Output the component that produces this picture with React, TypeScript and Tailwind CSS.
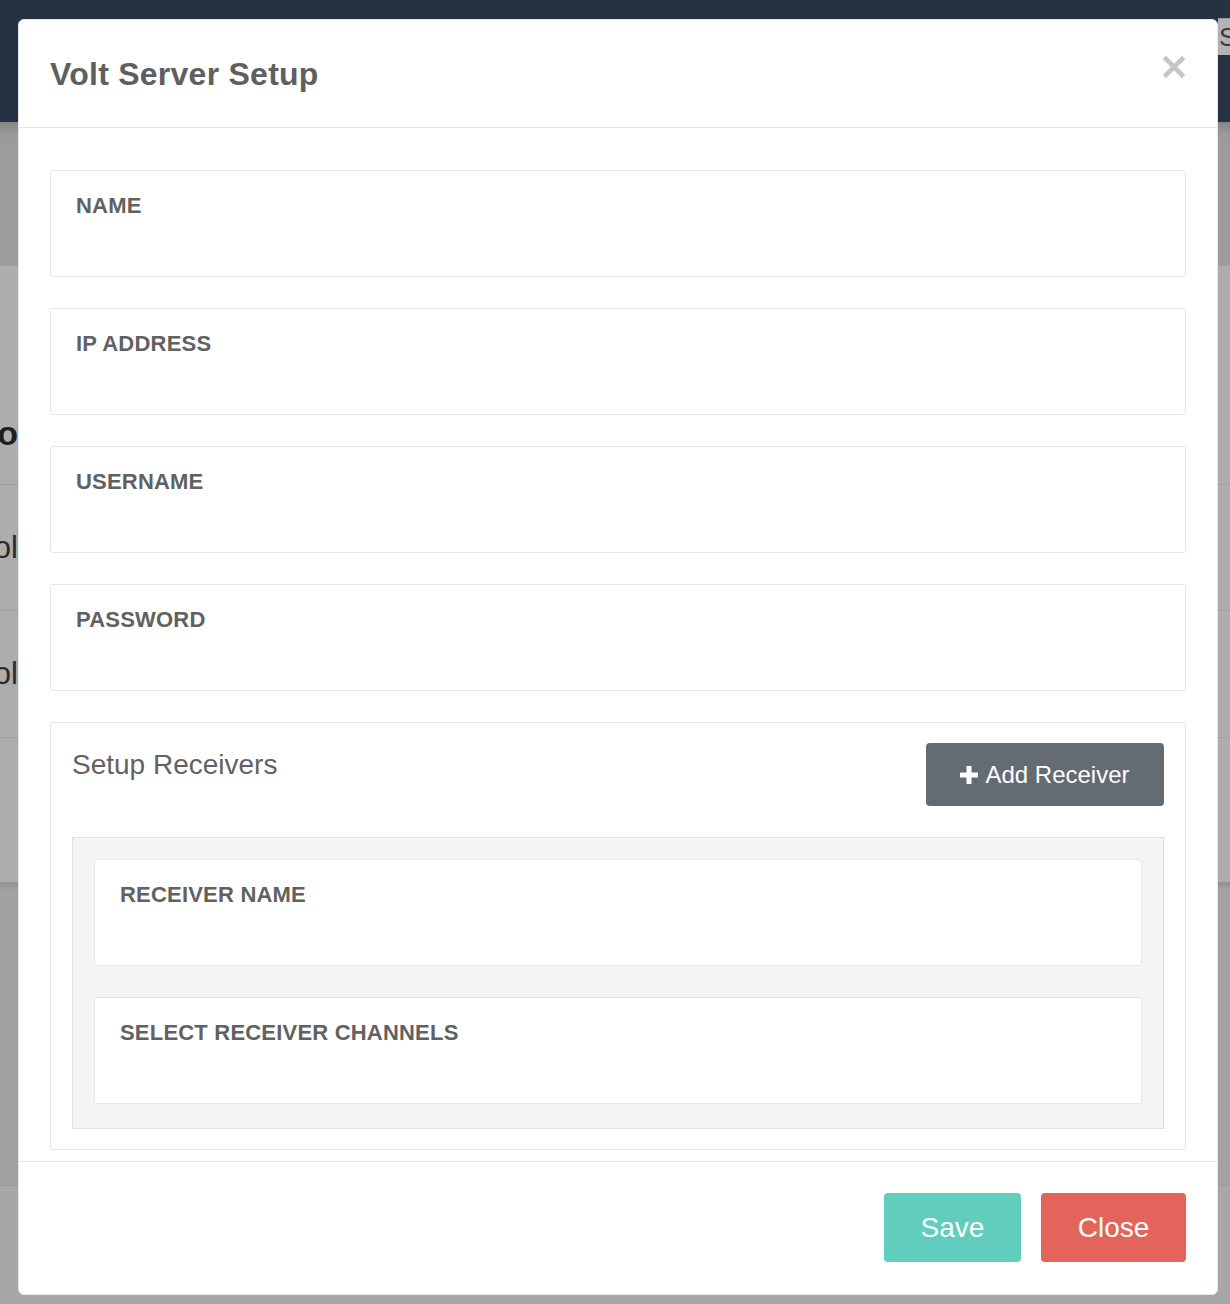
import React from "react";

const font = { fontFamily: '"Liberation Sans", Arial, Helvetica, sans-serif' };

function Field({ label }: { label: string }) {
  return (
    <div className="h-[107px] rounded-[3px] border border-[#e6e6e6] bg-white pl-[25px] pt-[18px]">
      <div className="text-[22px] font-bold leading-[33px] tracking-[0.2px] text-[#616161]">{label}</div>
    </div>
  );
}

function PlusIcon() {
  return (
    <svg width="18" height="18" viewBox="0 0 18 18" className="shrink-0">
      <rect x="6.5" y="0" width="5" height="18" rx="0.5" fill="#ffffff" />
      <rect x="0" y="6.5" width="18" height="5" rx="0.5" fill="#ffffff" />
    </svg>
  );
}

function CloseX() {
  return (
    <svg width="22" height="22" viewBox="0 0 22 22">
      <path d="M3 3 L19 19 M19 3 L3 19" stroke="#c6c6c6" strokeWidth="4.6" strokeLinecap="square" />
    </svg>
  );
}

export default function App() {
  return (
    <div className="relative h-[1304px] w-[1230px] overflow-hidden bg-[#a7a7a7]" style={font}>
      {/* Background page (dimmed) */}
      <div className="flex h-[122px] justify-end bg-[#263241]">
        <div className="mt-[18px] h-[37px] w-[12px] overflow-hidden border-t border-[#9a9a9a] bg-[#b3b3b3] pl-[1px] text-[26px] leading-[36px] text-[#3a3a3a]">
          Setup
        </div>
      </div>
      <div className="h-[143px] bg-gradient-to-b from-[#858585] via-[#9a9a9a] to-[#9c9c9c] [background-size:100%_24px] bg-no-repeat bg-[#9c9c9c]" />
      <div className="flex h-[617px] flex-col border-t border-[#a3a3a3] bg-[#adadad]">
        <div className="flex h-[219px] items-end border-b border-[#a0a0a0] pb-[31px]">
          <div className="flex w-[18px] justify-end overflow-hidden whitespace-nowrap text-[34px] font-bold leading-[40px] text-[#1e1e1e]">
            Radio
          </div>
        </div>
        <div className="flex h-[126px] items-center border-b border-[#a0a0a0]">
          <div className="flex w-[18px] justify-end overflow-hidden whitespace-nowrap text-[31px] leading-[36px] text-[#2a2a2a]">
            Tool
          </div>
        </div>
        <div className="flex h-[127px] items-center border-b border-[#a0a0a0]">
          <div className="flex w-[18px] justify-end overflow-hidden whitespace-nowrap text-[31px] leading-[36px] text-[#2a2a2a]">
            Tool
          </div>
        </div>
        <div className="flex-1" />
      </div>
      <div className="h-[303px] bg-gradient-to-b from-[#8f8f8f] to-[#a2a2a2] [background-size:100%_8px] bg-no-repeat bg-[#a2a2a2]" />
      <div className="h-[119px] border-t border-[#9a9a9a] bg-[#a7a7a7]" />

      {/* Modal */}
      <div className="absolute left-[18px] top-[19px] w-[1200px] rounded-[6px] border border-[#e4eaea] bg-white">
        <div className="flex h-[108px] items-center justify-between border-b border-[#e5e5e5] pl-[31px] pr-[32px]">
          <h2 className="text-[32px] font-bold leading-[36px] tracking-[0.25px] text-[#5f5f5f]">Volt Server Setup</h2>
          <div className="mb-[14px]">
            <CloseX />
          </div>
        </div>

        <div className="flex flex-col gap-[31px] px-[31px] pb-[11px] pt-[42px]">
          <Field label="NAME" />
          <Field label="IP ADDRESS" />
          <Field label="USERNAME" />
          <Field label="PASSWORD" />

          <div className="rounded-[2px] border border-[#e6e6e6] bg-white pb-[20px] pl-[21px] pr-[21px] pt-[20px]">
            <div className="flex items-start justify-between">
              <div className="mt-[6px] text-[28px] leading-[32px] text-[#626262]">Setup Receivers</div>
              <button className="flex h-[63px] w-[238px] items-center justify-center gap-[7px] rounded-[4px] bg-[#646b72] text-[24px] leading-[28px] text-white">
                <PlusIcon />
                <span>Add Receiver</span>
              </button>
            </div>
            <div className="mt-[31px] flex flex-col gap-[31px] border border-[#e0e0e0] bg-[#f4f4f4] px-[21px] pb-[24px] pt-[21px]">
              <Field label="RECEIVER NAME" />
              <Field label="SELECT RECEIVER CHANNELS" />
            </div>
          </div>
        </div>

        <div className="flex justify-end gap-[20px] border-t border-[#e5e5e5] pb-[32px] pr-[31px] pt-[31px]">
          <button className="h-[69px] w-[137px] rounded-[4px] bg-[#61cdbd] text-[28px] text-white">Save</button>
          <button className="h-[69px] w-[145px] rounded-[4px] bg-[#e2645a] text-[28px] text-white">Close</button>
        </div>
      </div>
    </div>
  );
}
